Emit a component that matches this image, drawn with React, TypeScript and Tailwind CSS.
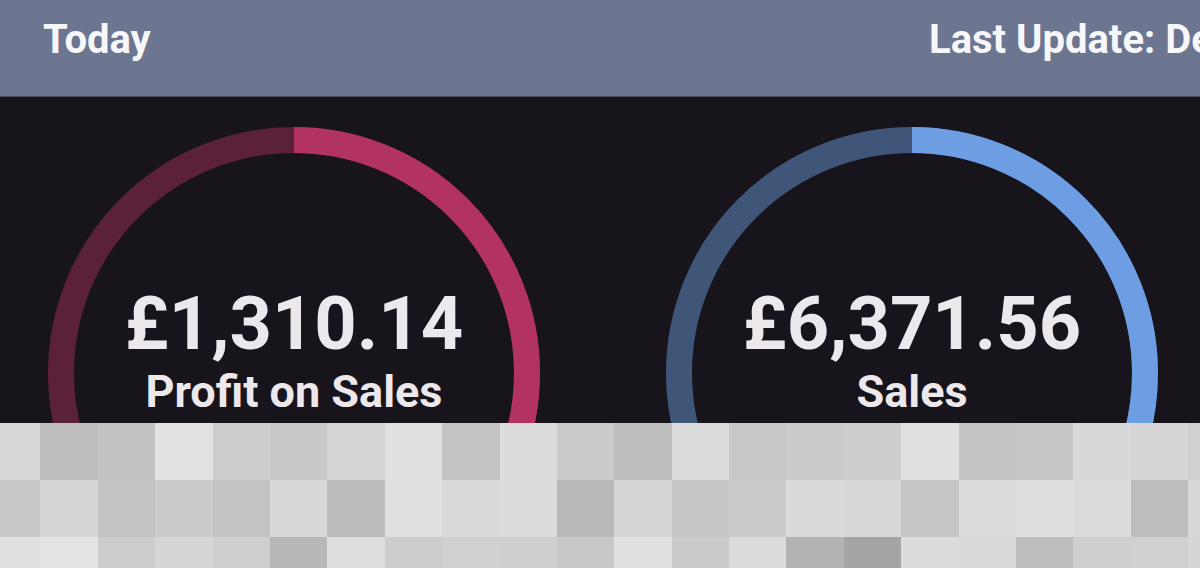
import React from "react";

const TILES: string[][] = [
  [
    "bg-[#d8d8d8]", "bg-[#bdbdbd]", "bg-[#c2c2c2]", "bg-[#e2e2e2]", "bg-[#cdcdcd]", "bg-[#c8c8c8]",
    "bg-[#d5d5d5]", "bg-[#e0e0e0]", "bg-[#c3c3c3]", "bg-[#dcdcdc]", "bg-[#cbcbcb]", "bg-[#bebebe]",
    "bg-[#dcdcdc]", "bg-[#c8c8c8]", "bg-[#cbcbcb]", "bg-[#cdcdcd]", "bg-[#e0e0e0]", "bg-[#c4c4c4]",
    "bg-[#c6c6c6]", "bg-[#d8d8d8]", "bg-[#d6d6d6]", "bg-[#d0d0d0]",
  ],
  [
    "bg-[#c9c9c9]", "bg-[#d6d6d6]", "bg-[#c3c3c3]", "bg-[#cbcbcb]", "bg-[#c3c3c3]", "bg-[#d8d8d8]",
    "bg-[#bcbcbc]", "bg-[#e0e0e0]", "bg-[#dadada]", "bg-[#dcdcdc]", "bg-[#b9b9b9]", "bg-[#d6d6d6]",
    "bg-[#c6c6c6]", "bg-[#cbcbcb]", "bg-[#dadada]", "bg-[#d8d8d8]", "bg-[#c6c6c6]", "bg-[#dbdbdb]",
    "bg-[#dedede]", "bg-[#dbdbdb]", "bg-[#bdbdbd]", "bg-[#d8d8d8]",
  ],
  [
    "bg-[#e0e0e0]", "bg-[#e3e3e3]", "bg-[#cccccc]", "bg-[#d6d6d6]", "bg-[#cfcfcf]", "bg-[#b8b8b8]",
    "bg-[#dedede]", "bg-[#cdcdcd]", "bg-[#d0d0d0]", "bg-[#cfcfcf]", "bg-[#c8c8c8]", "bg-[#e0e0e0]",
    "bg-[#cbcbcb]", "bg-[#dcdcdc]", "bg-[#b3b3b3]", "bg-[#a5a5a5]", "bg-[#dcdcdc]", "bg-[#dadada]",
    "bg-[#bdbdbd]", "bg-[#cfcfcf]", "bg-[#d0d0d0]", "bg-[#d6d6d6]",
  ],
];

const R = 233;
const CIRC = 2 * Math.PI * R;

function Ring({
  value,
  label,
  progress,
  track,
  fill,
}: {
  value: string;
  label: string;
  progress: number;
  track: string;
  fill: string;
}) {
  return (
    <div className="relative h-[492px] w-[492px] shrink-0">
      <svg className="absolute inset-0" width={492} height={492} viewBox="0 0 492 492">
        <circle cx={246} cy={246} r={R} fill="none" stroke={track} strokeWidth={26} />
        <circle
          cx={246}
          cy={246}
          r={R}
          fill="none"
          stroke={fill}
          strokeWidth={26}
          strokeDasharray={`${CIRC * progress} ${CIRC}`}
          transform="rotate(-90 246 246)"
        />
      </svg>
      <div className="relative flex flex-col items-center pt-[160px] text-[#ece8ec]">
        <p className="text-[74px] font-bold leading-none">{value}</p>
        <p className="mt-2 text-[45px] font-bold leading-none">{label}</p>
      </div>
    </div>
  );
}

export default function App() {
  return (
    <div className="relative flex h-[568px] w-[1200px] flex-col overflow-hidden bg-[#17141b] font-[Roboto,sans-serif]">
      <header className="flex h-[97px] shrink-0 items-start overflow-hidden border-b border-[#4a4c5e] bg-[#6c7691] pt-[20px] text-[40px] font-bold leading-none text-[#f7f7fa]">
        <span className="w-[929px] shrink-0 pl-[43px]">Today</span>
        <span className="whitespace-nowrap">Last Update: Dec 14, 2023 10:45</span>
      </header>

      <main className="flex gap-[126px] pl-[48px] pt-[30px]">
        <Ring value="£1,310.14" label="Profit on Sales" progress={0.42} track="#5b2139" fill="#b23361" />
        <Ring value="£6,371.56" label="Sales" progress={0.42} track="#3f5679" fill="#6d9de2" />
      </main>

      {/* pixelated cover over the lower half */}
      <div className="absolute left-[-17px] top-[423px] grid grid-cols-[repeat(22,57.4px)] grid-rows-[repeat(3,57px)]">
        {TILES.map((row, r) =>
          row.map((c, i) => <div key={`${r}-${i}`} className={c} />)
        )}
      </div>
    </div>
  );
}
